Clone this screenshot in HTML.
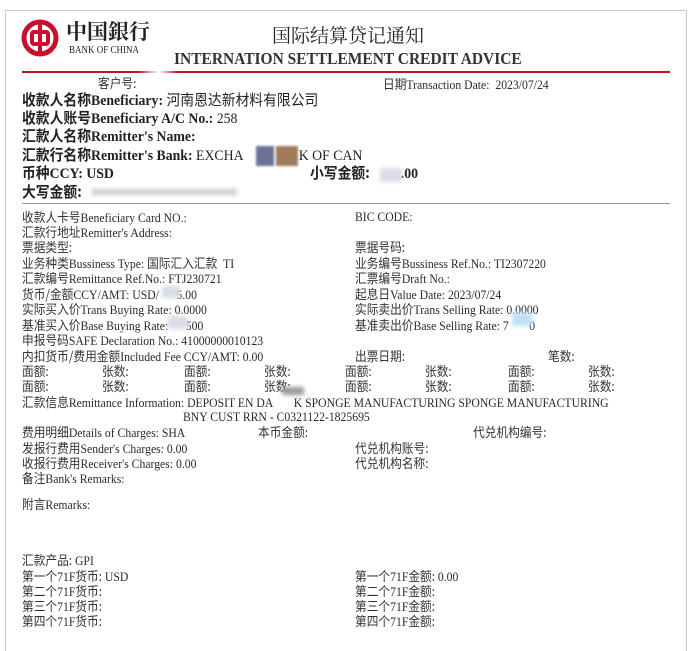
<!DOCTYPE html>
<html><head><meta charset="utf-8"><style>
*{margin:0;padding:0}
body{width:700px;height:621px;background:#fff;position:relative;overflow:hidden;font-family:"Liberation Serif","Noto Sans CJK SC",serif;color:#222}
.frame{position:absolute;left:5px;top:10px;width:680px;height:640px;border:1px solid #c8c8c8;border-bottom:none}
.t{position:absolute;white-space:nowrap;transform-origin:0 0;line-height:1}
.s{font-size:13px;transform:scaleX(.9);color:#2a2a2a}
.b{font-size:15px;font-weight:bold;transform:scaleX(.92);color:#222}
.cj{font-family:"Noto Sans CJK SC",sans-serif;font-weight:normal;color:#333}
.b .cj{font-weight:bold;color:#222}
.b .n{font-weight:normal}
.blur{position:absolute;background:#d8dce6;filter:blur(2px)}
</style></head><body>
<div class="frame"></div>
<svg style="position:absolute;left:21px;top:19px" width="38" height="38" viewBox="0 0 38 38">
<circle cx="19" cy="19" r="16" fill="none" stroke="#c8102e" stroke-width="5"/>
<rect x="11" y="13" width="16" height="12" rx="2" fill="none" stroke="#c8102e" stroke-width="4"/>
<rect x="17" y="2" width="4" height="34" fill="#c8102e"/>
</svg>
<div class="t" style="left:66px;top:21px;font-size:21px;font-family:'Noto Serif CJK SC',serif;font-weight:bold;color:#222">中国銀行</div>
<div class="t" style="left:69px;top:46px;font-size:10px;color:#222;transform:scaleX(.9)">BANK OF CHINA</div>
<div class="t" style="left:272px;top:25px;font-size:19px;font-family:'Noto Serif CJK SC',serif;color:#222">国际结算贷记通知</div>
<div class="t" style="left:174px;top:50px;font-size:17px;font-weight:bold;color:#333;transform:scaleX(.91)">INTERNATION SETTLEMENT CREDIT ADVICE</div>
<div style="position:absolute;left:22px;top:71px;width:648px;height:2px;background:linear-gradient(90deg,#c8102e 0%,#c8102e 18%,#fff 21%,#c8102e 24%,#c8102e 100%)"></div>
<div style="position:absolute;left:22px;top:203px;width:648px;height:1px;background:#999"></div>

<div class="t s" style="left:98px;top:76px"><span class="cj">客户号:</span></div>
<div class="t s" style="left:383px;top:77px"><span class="cj">日期</span>Transaction Date:&nbsp; 2023/07/24</div>
<div class="t b" style="left:22px;top:92px"><span class="cj">收款人名称</span>Beneficiary: <span class="cj n" style="font-weight:normal">河南恩达新材料有限公司</span></div>
<div class="t b" style="left:22px;top:110px"><span class="cj">收款人账号</span>Beneficiary A/C No.: <span class="n">258</span></div>
<div class="t b" style="left:22px;top:128px"><span class="cj">汇款人名称</span>Remitter's Name:</div>
<div class="t b" style="left:22px;top:147px"><span class="cj">汇款行名称</span>Remitter's Bank: <span class="n">EXCHA&nbsp;&nbsp;&nbsp;&nbsp;&nbsp;&nbsp;&nbsp;&nbsp;&nbsp;&nbsp;&nbsp;&nbsp;&nbsp;&nbsp;&nbsp;&nbsp;K OF CAN</span></div>
<div style="position:absolute;left:256px;top:146px;width:18px;height:20px;background:#6a7396;filter:blur(1px)"></div>
<div style="position:absolute;left:276px;top:146px;width:22px;height:20px;background:#a07c5a;filter:blur(1px)"></div>
<div class="t b" style="left:22px;top:165px"><span class="cj">币种</span>CCY: USD</div>
<div class="t b" style="left:310px;top:165px"><span class="cj">小写金额:</span>&nbsp;&nbsp;&nbsp;&nbsp;&nbsp;&nbsp;&nbsp;&nbsp;&nbsp;.00</div>
<div class="blur" style="left:380px;top:168px;width:22px;height:14px"></div>
<div class="t b" style="left:22px;top:184px"><span class="cj">大写金额:</span></div>
<div class="blur" style="left:92px;top:189px;width:145px;height:6px;background:#ccc"></div>

<div class="t s" style="left:22px;top:210px"><span class="cj">收款人卡号</span>Beneficiary Card NO.:</div>
<div class="t s" style="left:355px;top:210px">BIC CODE:</div>
<div class="t s" style="left:22px;top:225px"><span class="cj">汇款行地址</span>Remitter's Address:</div>
<div class="t s" style="left:22px;top:240px"><span class="cj">票据类型:</span></div>
<div class="t s" style="left:355px;top:240px"><span class="cj">票据号码:</span></div>
<div class="t s" style="left:22px;top:256px"><span class="cj">业务种类</span>Bussiness Type: <span class="cj">国际汇入汇款</span>&nbsp; TI</div>
<div class="t s" style="left:355px;top:256px"><span class="cj">业务编号</span>Bussiness Ref.No.: TI2307220</div>
<div class="t s" style="left:22px;top:271px"><span class="cj">汇款编号</span>Remittance Ref.No.: FTJ230721</div>
<div class="t s" style="left:355px;top:271px"><span class="cj">汇票编号</span>Draft No.:</div>
<div class="t s" style="left:22px;top:287px"><span class="cj">货币/金额</span>CCY/AMT: USD/&nbsp;&nbsp;&nbsp;&nbsp;&nbsp;&nbsp;5.00</div>
<div class="blur" style="left:162px;top:286px;width:18px;height:12px"></div>
<div class="t s" style="left:355px;top:287px"><span class="cj">起息日</span>Value Date: 2023/07/24</div>
<div class="t s" style="left:22px;top:302px"><span class="cj">实际买入价</span>Trans Buying Rate: 0.0000</div>
<div class="t s" style="left:355px;top:302px"><span class="cj">实际卖出价</span>Trans Selling Rate: 0.0000</div>
<div class="t s" style="left:22px;top:318px"><span class="cj">基准买入价</span>Base Buying Rate:&nbsp;&nbsp;&nbsp;&nbsp;&nbsp;&nbsp;500</div>
<div class="blur" style="left:168px;top:316px;width:20px;height:13px"></div>
<div class="t s" style="left:355px;top:318px"><span class="cj">基准卖出价</span>Base Selling Rate: 7&nbsp;&nbsp;&nbsp;&nbsp;&nbsp;&nbsp;&nbsp;0</div>
<div class="blur" style="left:512px;top:313px;width:20px;height:13px;background:#bfe0f8"></div>
<div class="t s" style="left:22px;top:333px"><span class="cj">申报号码</span>SAFE Declaration No.: 41000000010123</div>
<div class="t s" style="left:22px;top:349px"><span class="cj">内扣货币/费用金额</span>Included Fee CCY/AMT: 0.00</div>
<div class="t s" style="left:355px;top:349px"><span class="cj">出票日期:</span></div>
<div class="t s" style="left:548px;top:349px"><span class="cj">笔数:</span></div>
<div class="t s" style="left:22px;top:364px"><span class="cj">面额:</span></div><div class="t s" style="left:102px;top:364px"><span class="cj">张数:</span></div><div class="t s" style="left:184px;top:364px"><span class="cj">面额:</span></div><div class="t s" style="left:264px;top:364px"><span class="cj">张数:</span></div><div class="t s" style="left:345px;top:364px"><span class="cj">面额:</span></div><div class="t s" style="left:425px;top:364px"><span class="cj">张数:</span></div><div class="t s" style="left:508px;top:364px"><span class="cj">面额:</span></div><div class="t s" style="left:588px;top:364px"><span class="cj">张数:</span></div>
<div class="t s" style="left:22px;top:379px"><span class="cj">面额:</span></div><div class="t s" style="left:102px;top:379px"><span class="cj">张数:</span></div><div class="t s" style="left:184px;top:379px"><span class="cj">面额:</span></div><div class="t s" style="left:264px;top:379px"><span class="cj">张数:</span></div><div class="t s" style="left:345px;top:379px"><span class="cj">面额:</span></div><div class="t s" style="left:425px;top:379px"><span class="cj">张数:</span></div><div class="t s" style="left:508px;top:379px"><span class="cj">面额:</span></div><div class="t s" style="left:588px;top:379px"><span class="cj">张数:</span></div>
<div class="t s" style="left:22px;top:395px"><span class="cj">汇款信息</span>Remittance Information: DEPOSIT EN DA&nbsp;&nbsp;&nbsp;&nbsp;&nbsp;&nbsp;&nbsp;K SPONGE MANUFACTURING SPONGE MANUFACTURING</div>
<div class="blur" style="left:282px;top:387px;width:22px;height:8px;background:#999"></div>
<div class="t s" style="left:183px;top:410px">BNY CUST RRN - C0321122-1825695</div>
<div class="t s" style="left:22px;top:425px"><span class="cj">费用明细</span>Details of Charges: SHA</div>
<div class="t s" style="left:258px;top:425px"><span class="cj">本币金额:</span></div>
<div class="t s" style="left:473px;top:425px"><span class="cj">代兑机构编号:</span></div>
<div class="t s" style="left:22px;top:441px"><span class="cj">发报行费用</span>Sender's Charges: 0.00</div>
<div class="t s" style="left:355px;top:441px"><span class="cj">代兑机构账号:</span></div>
<div class="t s" style="left:22px;top:456px"><span class="cj">收报行费用</span>Receiver's Charges: 0.00</div>
<div class="t s" style="left:355px;top:456px"><span class="cj">代兑机构名称:</span></div>
<div class="t s" style="left:22px;top:471px"><span class="cj">备注</span>Bank's Remarks:</div>
<div class="t s" style="left:22px;top:497px"><span class="cj">附言</span>Remarks:</div>
<div class="t s" style="left:22px;top:553px"><span class="cj">汇款产品:</span> GPI</div>
<div class="t s" style="left:22px;top:569px"><span class="cj">第一个</span>71F<span class="cj">货币:</span> USD</div>
<div class="t s" style="left:355px;top:569px"><span class="cj">第一个</span>71F<span class="cj">金额:</span> 0.00</div>
<div class="t s" style="left:22px;top:584px"><span class="cj">第二个</span>71F<span class="cj">货币:</span></div>
<div class="t s" style="left:355px;top:584px"><span class="cj">第二个</span>71F<span class="cj">金额:</span></div>
<div class="t s" style="left:22px;top:599px"><span class="cj">第三个</span>71F<span class="cj">货币:</span></div>
<div class="t s" style="left:355px;top:599px"><span class="cj">第三个</span>71F<span class="cj">金额:</span></div>
<div class="t s" style="left:22px;top:614px"><span class="cj">第四个</span>71F<span class="cj">货币:</span></div>
<div class="t s" style="left:355px;top:614px"><span class="cj">第四个</span>71F<span class="cj">金额:</span></div>
</body></html>
